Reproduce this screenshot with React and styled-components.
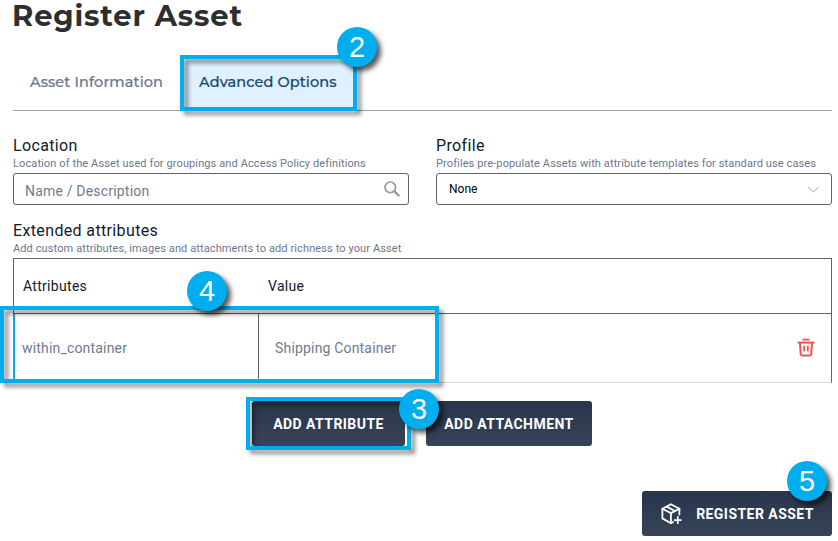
import React from "react";
import styled, { createGlobalStyle } from "styled-components";

const GlobalStyle = createGlobalStyle`
  *, *::before, *::after { box-sizing: border-box; }
  body { margin: 0; background: #fff; font-family: Roboto, "Liberation Sans", sans-serif; }
`;

const Page = styled.main`
  position: relative;
  width: 838px;
  height: 541px;
  padding: 0 6px 0 13px;
  overflow: hidden;
  display: flex;
  flex-direction: column;
`;

const Title = styled.h1`
  margin: 0 0 0 -1px;
  height: 55px;
  font: 700 29px/32px Montserrat, Inter, sans-serif;
  letter-spacing: 0.85px;
  color: #2d2e30;
  white-space: nowrap;
`;

const Tabs = styled.nav`
  display: flex;
  height: 56px;
  border-bottom: 1px solid #a0a0a0;
`;

const Tab = styled.button`
  position: relative;
  width: ${(p) => (p.$active ? 177 : 167)}px;
  height: 56px;
  padding: 0 0 2px ${(p) => (p.$active ? 19 : 17)}px;
  border: 0;
  background: ${(p) => (p.$active ? "#dff0fe" : "transparent")};
  color: ${(p) => (p.$active ? "#164a6e" : "#6e7890")};
  font: 500 14.5px/18px Montserrat, Inter, sans-serif;
  letter-spacing: 0.1px;
  -webkit-text-stroke: 0.2px currentColor;
  text-align: left;
  white-space: nowrap;
`;

const Fields = styled.section`
  display: grid;
  grid-template-columns: 396px 396px;
  column-gap: 27px;
  padding-top: 25px;
`;

const Label = styled.h2`
  margin: 0;
  font-size: 16px;
  line-height: 19px;
  font-weight: 400;
  letter-spacing: 0.36px;
  color: #111a2c;
`;

const Hint = styled.p`
  margin: 2px 0 0;
  font-size: 11px;
  line-height: 13px;
  letter-spacing: 0.11px;
  color: #6b7690;
  white-space: nowrap;
`;

const Control = styled.div`
  display: flex;
  align-items: center;
  justify-content: space-between;
  height: 32px;
  margin-top: 3px;
  padding: 0 ${(p) => (p.$select ? 11 : 8)}px 0 ${(p) => (p.$select ? 12 : 11)}px;
  border: 1px solid #626262;
  border-radius: 3px;
`;

const Placeholder = styled.span`
  padding-top: 4px;
  font-size: 14px;
  line-height: 18px;
  letter-spacing: 0.19px;
  color: #6f7a92;
`;

const Selected = styled.span`
  font-size: 12px;
  line-height: 16px;
  color: #000;
`;

const Extended = styled.section`
  padding-top: 16px;
`;

const Table = styled.div`
  height: 125px;
  margin-top: 3px;
  border: 1px solid #626262;
  border-bottom-color: #d8d8d8;
`;

const HeadRow = styled.div`
  display: grid;
  grid-template-columns: 245px 1fr;
  align-items: center;
  height: 55px;
  border-bottom: 1px solid #626262;
`;

const HeadCell = styled.div`
  padding-left: 9px;
  font-size: 14px;
  line-height: 18px;
  letter-spacing: 0.3px;
  color: #111a2c;
`;

const BodyRow = styled.div`
  position: relative;
  display: grid;
  grid-template-columns: 245px 1fr 50px;
  height: 68px;
`;

const BodyCell = styled.div`
  display: flex;
  align-items: center;
  padding: 0 0 0 ${(p) => (p.$name ? 8 : 16)}px;
  border-right: ${(p) => (p.$name ? "1px solid #626262" : "0")};
  box-shadow: ${(p) => (p.$name ? "inset 1px 0 #00adef, -1px 0 #00adef" : "none")};
  font-size: 14px;
  letter-spacing: 0.18px;
  color: #6f7a92;
`;

const DeleteButton = styled.button`
  display: flex;
  align-items: center;
  padding: 0 0 0 15.5px;
  border: 0;
  background: transparent;
`;

const Actions = styled.div`
  display: flex;
  gap: 21px;
  padding: 18px 0 0 239px;
`;

const Footer = styled.footer`
  display: flex;
  justify-content: flex-end;
  padding-top: 45px;
`;

const ActionButton = styled.button`
  position: relative;
  display: flex;
  align-items: center;
  justify-content: center;
  gap: 14px;
  width: ${(p) => p.$width}px;
  height: 45px;
  padding: 0;
  border: 0;
  border-radius: 3px;
  background: linear-gradient(#28354a, #364359);
  color: #fff;
  font: 700 14px/18px Roboto, sans-serif;
  letter-spacing: 0.45px;
  white-space: nowrap;
`;

const Highlight = styled.div`
  position: absolute;
  top: ${(p) => p.$top}px;
  left: ${(p) => p.$left}px;
  width: ${(p) => p.$width}px;
  height: ${(p) => p.$height}px;
  border: 4px solid #00adef;
  filter: drop-shadow(4px 4px 2px rgba(0, 0, 0, 0.45));
  pointer-events: none;
`;

const Badge = styled.div`
  position: absolute;
  z-index: 2;
  top: ${(p) => p.$top}px;
  left: ${(p) => p.$left}px;
  width: 40px;
  height: 40px;
  border-radius: 50%;
  background: #00adef;
  box-shadow: 4px 4px 5px rgba(0, 0, 0, 0.65);
  color: #fff;
  font: 400 29px/40px "Liberation Sans", Arial, sans-serif;
  letter-spacing: 0;
  text-align: center;
  -webkit-text-stroke: 0;
`;

const SearchIcon = () => (
  <svg width="16" height="16" viewBox="0 0 16 16" fill="none" stroke="#999">
    <circle cx="6.3" cy="6.3" r="5.3" strokeWidth="1.7" />
    <path d="M10.4 10.4 14.6 14.4" strokeWidth="2.4" strokeLinecap="round" />
  </svg>
);

const ChevronIcon = () => (
  <svg width="13" height="7" viewBox="0 0 13 7" fill="none" stroke="#aaa">
    <path d="M1 1.2 6.5 5.7 12 1.2" />
  </svg>
);

const TrashIcon = () => (
  <svg width="18" height="20" viewBox="0 0 18 20" fill="none" stroke="#f0524f">
    <path d="M5.5 1.6H12.5" strokeWidth="1.8" />
    <path d="M.6 4.6H17.4" strokeWidth="2" />
    <path d="M3 5 3.7 15.8Q3.8 17.6 5.6 17.6H12.4Q14.2 17.6 14.3 15.8L15 5" strokeWidth="2" />
    <path d="M7.2 7.8V13.6M10.8 7.8V13.6" strokeWidth="1.8" />
  </svg>
);

const PackagePlusIcon = () => (
  <svg width="22" height="22" viewBox="0 0 22 22" fill="none" stroke="#fff" strokeWidth="1.8" strokeLinejoin="round" strokeLinecap="round">
    <path d="M19.4 11.5V5.8L10.9 1.2 2.4 5.8V15.4L10.9 20.2 13 19" />
    <path d="M2.4 5.8 10.9 10.1 19.4 5.8M10.9 10.1V20M6.6 3.6 15 8" />
    <path d="M17.8 14V20.2M14.7 17.1H20.9" />
  </svg>
);

export default function App() {
  return (
    <>
      <GlobalStyle />
      <Page>
        <Title>Register Asset</Title>
        <Tabs>
          <Tab>Asset Information</Tab>
          <Tab $active>
            Advanced Options
            <Highlight $top={0} $left={0} $width={177} $height={56} />
            <Badge $top={-28} $left={157}>2</Badge>
          </Tab>
        </Tabs>
        <Fields>
          <div>
            <Label>Location</Label>
            <Hint>Location of the Asset used for groupings and Access Policy definitions</Hint>
            <Control>
              <Placeholder>Name / Description</Placeholder>
              <SearchIcon />
            </Control>
          </div>
          <div>
            <Label>Profile</Label>
            <Hint>Profiles pre-populate Assets with attribute templates for standard use cases</Hint>
            <Control $select>
              <Selected>None</Selected>
              <ChevronIcon />
            </Control>
          </div>
        </Fields>
        <Extended>
          <Label>Extended attributes</Label>
          <Hint>Add custom attributes, images and attachments to add richness to your Asset</Hint>
          <Table>
            <HeadRow>
              <HeadCell>Attributes</HeadCell>
              <HeadCell>Value</HeadCell>
            </HeadRow>
            <BodyRow>
              <BodyCell $name>within_container</BodyCell>
              <BodyCell>Shipping Container</BodyCell>
              <DeleteButton aria-label="Delete attribute">
                <TrashIcon />
              </DeleteButton>
              <Highlight $top={-8} $left={-14} $width={439} $height={77} />
              <Badge $top={-43} $left={173}>4</Badge>
            </BodyRow>
          </Table>
        </Extended>
        <Actions>
          <ActionButton $width={153}>
            ADD ATTRIBUTE
            <Highlight $top={-4} $left={-6} $width={165} $height={53} />
            <Badge $top={-12} $left={147}>3</Badge>
          </ActionButton>
          <ActionButton $width={166}>ADD ATTACHMENT</ActionButton>
        </Actions>
        <Footer>
          <ActionButton $width={190}>
            <PackagePlusIcon />
            REGISTER ASSET
            <Badge $top={-30} $left={145}>5</Badge>
          </ActionButton>
        </Footer>
      </Page>
    </>
  );
}
